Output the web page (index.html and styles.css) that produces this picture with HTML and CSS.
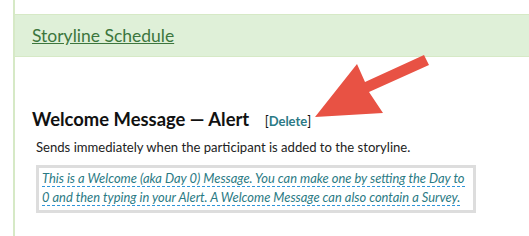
FILE: index.html
```html
<!DOCTYPE html>
<html>
<head>
<meta http-equiv="Content-Type" content="text/html; charset=utf-8">
<title>Storyline Schedule</title>
<link rel="stylesheet" href="styles.css">
</head>

<body>

<div class="panel">
  <div class="panel__heading">
    <a href="#schedule" class="panel__title">Storyline Schedule</a>
  </div>
  <div class="panel__body">
    <h3 class="msg__title">
      Welcome Message &mdash; Alert
      <span class="msg__actions">[<a href="#delete" class="msg__delete">Delete</a>]</span>
    </h3>
    <p class="msg__desc">Sends immediately when the participant is added to the storyline.</p>
    <div class="msg__note">
      <a href="#help" class="msg__hint">This is a Welcome (aka Day 0) Message. You can make one by setting the Day to 0 and then typing in your Alert. A Welcome Message can also contain a Survey.</a>
    </div>
  </div>
</div>

<!-- callout arrow pointing at Delete -->
<svg class="callout" width="529" height="236" viewBox="0 0 529 236">
  <polygon points="424,55 429,65 369,92 383,113 315,117 357,64 365,82" fill="#e85244"/>
</svg>

</body>
</html>
```

FILE: styles.css
```css
/* reset */
div,h3,p{margin:0;padding:0}

html,body{font-family:Lato,"Open Sans",sans-serif;font-size:13px;color:#222;}
body{margin:0;position:relative;overflow:hidden;height:236px;background:#fff;}

/* panel */
.panel{margin-left:13px;border-left:2px solid #d6e9c6;padding-top:14px;min-height:236px;box-sizing:border-box;}
.panel__heading{background-color:#dff0d8;border-top:1px solid #d6e9c6;border-bottom:1px solid #d6e9c6;height:41px;padding-left:17px;display:flex;align-items:center;}
.panel__title{font-size:17.5px;color:#3c763d;text-decoration:underline;}

.panel__body{padding:50px 0 0 17px;}

/* message */
.msg__title{font-size:18.4px;font-weight:700;color:#111;line-height:24px;}
.msg__actions{font-size:13px;font-weight:400;margin-left:11px;}
.msg__delete{color:#2b7a86;font-weight:700;text-decoration:none;}
.msg__desc{font-size:13.1px;color:#222;line-height:20px;margin:4px 0 0 4px;}
.msg__note{margin:8px 0 0 4px;width:431px;border:3px solid #ddd;padding:1px 0 3px 3px;line-height:19px;}
.msg__hint{font-size:12.9px;font-style:italic;color:#2a7a84;text-decoration:none;border-bottom:1px dashed #2d95d8;}

.callout{position:absolute;left:0;top:0;pointer-events:none;}
```
